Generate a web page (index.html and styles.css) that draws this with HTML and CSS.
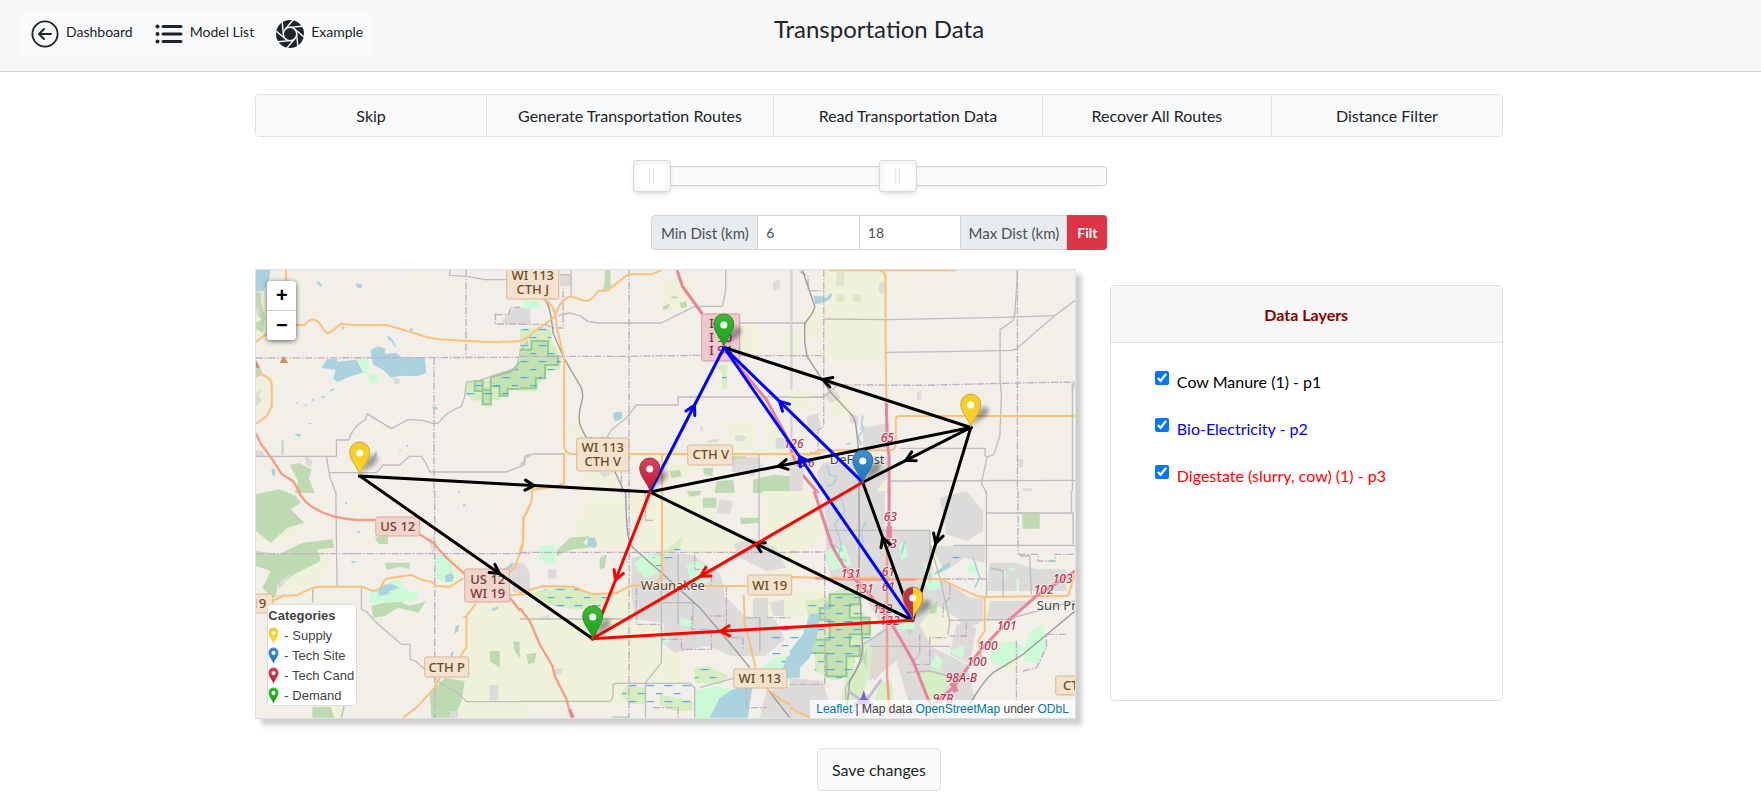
FILE: index.html
```html
<!DOCTYPE html>
<html lang="en">
<head>
<meta charset="utf-8">
<title>Transportation Data</title>
<link rel="stylesheet" href="styles.css">
</head>
<body>
<svg class="defs" width="0" height="0" aria-hidden="true">
  <defs>
    <linearGradient id="gYellow" x2="0" y2="1"><stop offset="0" stop-color="#f5cb2e"/><stop offset="1" stop-color="#ffd326"/></linearGradient>
    <linearGradient id="gBlue" x2="0" y2="1"><stop offset="0" stop-color="#4490cc"/><stop offset="1" stop-color="#1a73bd"/></linearGradient>
    <linearGradient id="gRed" x2="0" y2="1"><stop offset="0" stop-color="#d3485c"/><stop offset="1" stop-color="#c4132f"/></linearGradient>
    <linearGradient id="gGreen" x2="0" y2="1"><stop offset="0" stop-color="#3fb936"/><stop offset="1" stop-color="#17a01a"/></linearGradient>
    <linearGradient id="gSplit"><stop offset=".5" stop-color="#c43045"/><stop offset=".5" stop-color="#ffd326"/></linearGradient>
    <path id="pin" d="M0 0C-1-7-10-14-10-23A10 10 0 0 1 10-23C10-14 1-7 0 0Z"/>
  </defs>
</svg>

<header class="topbar">
  <nav class="topnav">
    <a href="#dashboard" class="navlink">
      <svg viewBox="0 0 28 28"><circle cx="14" cy="14" r="12.6" fill="none" stroke="#212529" stroke-width="1.8"/><path d="M20 14H8.5M13 9l-5 5 5 5" fill="none" stroke="#212529" stroke-width="2" stroke-linecap="round" stroke-linejoin="round"/></svg>
      Dashboard</a>
    <a href="#models" class="navlink">
      <svg viewBox="0 0 28 28"><g stroke="#212529" stroke-width="3" stroke-linecap="round"><path d="M8 6.500H26M8 14H26M8 21.500H26"/></g><g fill="#212529"><circle cx="2.500" cy="6.500" r="2"/><circle cx="2.500" cy="14" r="2"/><circle cx="2.500" cy="21.500" r="2"/></g></svg>
      Model List</a>
    <a href="#example" class="navlink">
      <svg viewBox="0 0 28 28"><circle cx="14" cy="14" r="14" fill="#212529"/><circle cx="14" cy="14" r="6.700" fill="none" stroke="#f8f9fa" stroke-width="1.400"/>
        <g stroke="#f8f9fa" stroke-width="1.400"><path id="slit" d="M9.300 9.300L17 0"/><use href="#slit" transform="rotate(45 14 14)"/><use href="#slit" transform="rotate(90 14 14)"/><use href="#slit" transform="rotate(135 14 14)"/><use href="#slit" transform="rotate(180 14 14)"/><use href="#slit" transform="rotate(225 14 14)"/><use href="#slit" transform="rotate(270 14 14)"/><use href="#slit" transform="rotate(315 14 14)"/></g></svg>
      Example</a>
  </nav>
  <h1 class="title">Transportation Data</h1>
</header>

<main class="page">
  <div class="actions">
    <button type="button">Skip</button>
    <button type="button">Generate Transportation Routes</button>
    <button type="button">Read Transportation Data</button>
    <button type="button">Recover All Routes</button>
    <button type="button">Distance Filter</button>
  </div>

  <form class="filter">
    <div class="slider">
      <input type="range" min="0" max="100" value="0" aria-label="Minimum distance">
      <input type="range" min="0" max="100" value="54" aria-label="Maximum distance">
    </div>
    <div class="group">
      <label class="addon" for="min">Min Dist (km)</label>
      <input id="min" type="text" value="6">
      <input id="max" type="text" value="18">
      <label class="addon" for="max">Max Dist (km)</label>
      <button type="button" class="filt">Filt</button>
    </div>
  </form>

  <div class="columns">
    <section class="map" aria-label="Map">
      <svg class="canvas" viewBox="256 269 819 448" preserveAspectRatio="xMidYMid slice">
        <defs>
          <pattern id="marsh" width="54" height="48" patternUnits="userSpaceOnUse"><path d="M2 8h24M30 32h20" stroke="#3d9be9" stroke-width="3"/></pattern>
          <filter id="soft" x="-50%" y="-50%" width="200%" height="200%"><feGaussianBlur stdDeviation="2"/></filter>
          <marker id="aBlack" markerUnits="userSpaceOnUse" markerWidth="30" markerHeight="30" refX="14" refY="12" orient="auto"><path class="head black" d="M5 7L14 12L5 17"/></marker>
          <marker id="aBlue" markerUnits="userSpaceOnUse" markerWidth="30" markerHeight="30" refX="14" refY="12" orient="auto"><path class="head blue" d="M5 7L14 12L5 17"/></marker>
          <marker id="aRed" markerUnits="userSpaceOnUse" markerWidth="30" markerHeight="30" refX="14" refY="12" orient="auto"><path class="head red" d="M5 7L14 12L5 17"/></marker>
          <path id="shade" d="M0 0L7-6C20-11 20-20 14-20C8-20 5-12 0 0Z" fill="#000" opacity=".35" filter="url(#soft)"/>
        </defs>
        <rect x="200" y="200" width="1000" height="600" fill="#f2efe9"/>

        <!-- north west -->
        <g transform="translate(250 262) scale(.33333)">
          <path class="farm" d="M18 100L50 110V215L18 230ZM18 340L50 350L60 430L18 470ZM400 488l25-2 2 26-25 2zM485 20h18v25h-18z"/>
          <path class="wood" d="M18 85l18 5-3 20 12 50-5 50-22-12v-18l16-10-16-20zM120 605l30-5 35 20-8 25 18 45h-60l10-35zM95 530h7v45h-7zM18 310l15 5 5 20-20 10z"/>
          <path class="town" d="M18 560l20 5 10 15H18zM165 575l25 20-10 20-10-10zM430 345h15l8 10-5 8h-15zM760 170l30-35h50v48h-80zM18 390l20-10-12 20 12 10-20 20zM18 140l10-10v20l-10 5z"/>
          <path class="mint" d="M315 290l38-5 6 50-22-5zM357 335l26-4v30h-26zM820 112h20v25h-20z"/>
          <path class="water" d="M18 20H62L58 50L40 85L18 85ZM215 315l17-27 30-1v9l58-6 20 38-50 17-28 12-12-12 8-25zM362 262l23-12 23 8-3 14 35-2 15 13 70-1 5 48-30 10-50-2-25 7-25-25-30-15zM415 217l15 15 11 24-8-6-6-12-14-12zM200 54l10 4 8 10-4 3-12-9zM318 64q10-6 20 2l-2 8q-8 4-14-2zM275 190h8l2 7-8 4zM480 198l8-2 2 6-8 4zM545 430l16 2 4 8-12-2zM135 513l20-1-5 10-12-4zM165 424h6v6h-6zM215 400h10v5h-10zM240 380l14-4v5l-12 5zM175 480h10v4h-10zM65 615l12 4-2 22-8-4zM375 568l8-4-2 14-8 6zM470 545h6v6h-6zM625 683h6v6h-6zM448 560h6v4h-6zM138 418h6v4h-6zM185 408h8v5h-8z"/>
          <path class="marsh" d="M650 362l25-12 25 8 40-20 60-20 22-40 8-43h12v145h-66v23h-24v9l-25-2v20h-30v-15l-24-3-23-17z"/>
          <path class="marshline" d="M675 354h24v26h24v-38l60-16 40-40h17v92h-67v20h-24v-28h-26v54h-24v-40h-24z"/>
          <path d="M650 362l25-12 25 8 40-20 60-20 22-40 8-43h12v145h-66v23h-24v9l-25-2v20h-30v-15l-24-3-23-17z" fill="url(#marsh)"/>
          <path class="bound" d="M18 285L840 283M649 20V285M553 285V690M737 150v33h95M737 155h40l5-22h30"/>
          <path class="minor" d="M18 580H260V531H297Q303 510 320 490L348 468L352 452L425 497L475 470L520 472L548 481H565C580 465 585 450 635 430L645 400L650 357L690 352L740 335L800 315L812 262L830 235M230 580L240 640L258 690M240 629H380L400 606H450L480 580H515L528 600L540 627H770L825 605V580L840 573M600 20V37L650 40L705 50H775"/>
          <path class="orange" d="M109 20V60M18 237L70 200M130 186H165C180 165 195 165 210 182C225 205 230 218 245 205L275 182L310 186H410L470 203L540 225L570 229L650 234L740 238L825 233L845 205M18 325L50 342Q66 350 66 365V430L50 460L18 483"/>
          <path class="trunk" d="M18 510L35 545L65 585L95 632L130 655L152 690"/>
          <path d="M102 279l13 21H89zM18 290l13 24H18z" fill="#d08f55"/>
        </g>

        <!-- north centre -->
        <g transform="translate(520 262) scale(.33333)">
          <path class="farm" d="M425 45l95 5-4 80-90 5zM655 183h60v110h-60zM790 205h50v75h-50zM140 470l40 10 20 45h-60zM620 475h80v95h-80zM190 600h110l-10 90h-90zM435 600h100l-20 40-80 15zM735 480l70 10v80h-70z"/>
          <path class="wood" d="M255 22h18l-2 35 5 15-25 10 3-25zM430 130l20-8-5 15-15 3zM480 120l20-5 2 18-18 2zM455 100h20v6h-20zM450 625l30-5 5 20-30 5zM550 615l30 0-2 25-25-4zM620 580h60v20h-60zM590 655l50-5 5 40h-60zM700 650l60-15 60 5 5 45-125 5z"/>
          <path class="town" d="M0 140l30 5 5 35-35 5zM120 35h35v35h-35zM760 55l20-5v25l-20 10zM640 590l70-10 20 30-30 30-65-15zM768 525h40v32h-40zM565 530l30-2v8l-30 4zM645 515l35 5-8 15-25-2zM541 490h8v15h-8zM235 625l40 5-20 15z"/>
          <path class="mint" d="M10 115l50-2v22H10z"/>
          <path class="marsh" d="M0 200l60-10 35 10v30l30 60-5 30-45 5-25 60H0zM605 305h17v72h-15v-50l-20-15z"/>
          <path class="marshline" d="M0 260h35v-26h50v46h30v26H76v40H48v30H0"/>
          <path d="M0 200l60-10 35 10v30l30 60-5 30-45 5-25 60H0zM605 305h17v72h-15v-50l-20-15z" fill="url(#marsh)"/>
          <path class="water" d="M281 450q12-6 27-2l-2 18q-8 10-20 8-8-8-5-24z"/>
          <path class="bound" d="M328 20V690M0 184H75L100 195H130V75M0 280H328L600 276M660 278H890M200 524h75M305 600v90"/>
          <path class="minor" d="M618 20V80L608 130H525L425 180H235L205 175L180 158L150 150L115 157M658 180H890M262 522L275 500L320 465L350 426H475V402H910M0 605Q15 600 15 585L40 573H133M154 22V95M120 35h34M718 575V690M0 265l25-30"/>
          <path class="rural" d="M815 20V690"/>
          <path class="rail" d="M75 108C90 130 95 160 100 210L135 290L185 375C192 400 188 410 180 440C175 480 180 490 200 524M285 625L315 690"/>
          <path class="orange" d="M424 22L395 34H325L265 82L235 85C215 110 205 118 190 112L155 100C130 105 115 130 105 160L70 188L40 208C20 230 10 233 0 233M70 108C100 120 110 150 110 190L133 285V550Q135 572 160 573H900M133 570V660L110 672L35 680V690M427 573V690"/>
          <path class="motor" d="M472 22L488 70L548 153M640 290L740 410L800 520L835 620L895 690"/>
        </g>

        <!-- north east -->
        <g transform="translate(790 262) scale(.33333)">
          <path class="farm" d="M105 22H288V290H60L50 250L105 265ZM50 130l50 20v60l-50 20zM120 390l70 20-5 60-60-20zM0 380h60v60H0zM220 590h70v100h-70z"/>
          <path class="wood" d="M140 27h24v42h-24zM140 94h24v22h-24zM190 94h23v24h-23z" opacity=".4"/>
          <path class="town" d="M220 495l80-15v75l-80 5zM100 600l120-20 75 0v60l-40 50H100l-20-60zM268 60l15-5v35h-15zM380 390l15-8v25l-12 5zM685 588h15v25h-15zM700 676h25v14h-25zM103 400l30-25 20 30-30 15zM50 460l35-10 10 50-40 10zM0 600h40v90H0zM845 360h10v20h-10zM180 450l25 10v25l-25-5z"/>
          <path class="water" d="M72 98l18 0 20 6 10-12 8 0-4 14-24 14-24 4z"/>
          <path class="creek" d="M220 457l-5 25 5 20-15 20 10 25M110 605l10 30 20 5-10 25-20 5M170 545l15-5M225 490l-15 10"/>
          <path class="bound" d="M102 20V490L85 500V560M683 20V690M0 278H102M118 365L400 367L640 361L856 357M62 83H102M30 25l25 15v45M60 570h40"/>
          <path class="minor" d="M103 168L300 170L640 163L795 158L856 112M795 158L740 205L680 258L665 262L470 266L290 268M683 22C678 100 678 170 668 174L631 200V350L635 400L630 520L612 575L592 582L575 660L590 690M330 556H586V578L596 583M298 654L856 652M848 690V370L856 358M0 403H100L140 370"/>
          <path class="rail" d="M38 22L75 130Q72 150 45 180V240L52 280L120 385L190 460Q200 480 200 500L205 545L208 690"/>
          <path class="orange" d="M118 22H500M268 22Q287 24 287 45V200L290 420M318 540V472Q318 459 330 459H856M0 573L60 575L90 562H300Q318 560 318 545"/>
          <path class="motor" d="M290 420L292 540L298 580V690"/>
        </g>

        <!-- south west -->
        <g transform="translate(250 490) scale(.33333)">
          <path class="farm" d="M18 20l60-20 60 10-20 60 40 30-40 50H18zM120 180l80-30 50 10-30 100-60 40-90-10zM560 200l60-10 40 60-60 40-40-30zM640 340h200v380H640l-60-60 60-80zM690 330l110 80-50 80-80-20zM200 640h80v40h-80zM370 100h90v40h-90zM300 30l40 10-10 20-30-10z"/>
          <path class="wood" d="M18 10l70-15 50 20 15 20-30 20 40 40-50 15-50 45-45-35zM18 180l70 10 70-35 90-10 5 25-50 5 10 35-80 40-50 40-5 25 50-10-60 15-30-30 25-50-45-15zM405 215h75v20l-30-8-40 10zM375 140l40-5v25l-30-2zM365 345l70-20 45 20 50-15-25 35-60-15-40 25-35 5zM540 610l45-50 60 10-10 60-20 50H545zM188 648h55l10 32h-65zM720 480h30v50l-30-20zM790 450l50 10v60l-25-10-20-30z"/>
          <path class="town" d="M720 582h26v46h-26zM780 215l40 0 20 30v60h-50zM810 455l30-10v30zM538 150l15-20 10 40-15 15zM600 660h25v20h-25zM75 290l40-40 8 5-30 35z"/>
          <path class="mint" d="M360 305l30-20 65-25 5 30 45 20v20l-145 8zM556 190l50 5 5 55-30 25-25-20z"/>
          <path class="water" d="M385 300l20-20 25 0 20 10-30 10-10 12-20 2zM585 255l18-10 10 10-5 18-20 0zM760 235l30-20-2 15-18 8zM725 355l20-10v8l-15 8zM617 405l12-4-4 20-10 8zM602 485l10-5-2 14-8 4zM305 210h12v6h-12zM300 185h12v6h-12zM322 120h8v6h-8zM286 33h6v6h-6zM640 40h8v6h-8zM640 375h12v4h-12z"/>
          <path class="bound" d="M18 188H840M555 0V690"/>
          <path class="minor" d="M258 0L262 285M189 335V290M335 290V355L350 362L380 395L455 460H480L482 505L500 512L570 575L630 610L650 632H840M275 680l8-35"/>
          <path class="orange" d="M68 330L100 315L140 313L190 290L210 287H335L370 300Q395 298 400 275Q405 262 420 262L460 255L485 252L520 268L545 272L560 285L600 288L640 262M780 243L795 230L820 160L822 80L840 40M780 313L840 308M680 336L650 375V470L630 498M570 560L555 590L500 650L460 680"/>
          <path class="trunk" d="M145 0C160 30 180 45 200 55C240 80 290 85 320 87H378M510 130L550 155L590 200L646 250M780 320L820 370L840 400"/>
        </g>

        <!-- south centre -->
        <g transform="translate(520 490) scale(.33333)">
          <path class="farm" d="M210 20h110v150H180l-20-60zM330 0h95v180h-60zM430 20h120l60 90 110 40v40H430zM0 320l100 60h90v-10l80-60 80-20v290l-20 60H0zM330 400h95v180h-95zM430 480l60 0 0 100h-60zM730 0h110v250h-110zM680 320h140v60H700zM20 390l80 30 20 80-80-30z"/>
          <path class="town" d="M335 200l80-15 10-10 100 20 80 60 10 60 60 60 90 10 30 60-60 50h-100l-70-30-100 20-40-30 10-60-90-10-10-80zM85 235h25v30H85zM640 160l60-20 70 30 30 60-60 10-80-40zM700 320h45v60h-45zM748 335l45-10v50h-30zM600 25l40 5-10 40-40-5zM105 535l25-5-5 20-20 3zM740 600l100-20v100H720zM60 380l30-10v15z"/>
          <path class="wood" d="M110 180l40-40 60-5-20 20 20 15-50 5-50 20zM500 0h45l-5 12-30 5zM240 200l20-10-5 40-15 5zM20 490l30-5-5 30-20 5zM550 20h40v30h-40zM660 80l60 0-5 15-50 5zM278 676h50v8h-50zM820 480l20-20v60z"/>
          <path class="mint" d="M60 165l45-5v60l-30-5-18-10zM370 190l50 5 5 50-50 15-30-40zM500 220l45-10 30 60-60 10zM525 600l60-15 60 10-10 40-50 46h-60zM700 550l60-50 80-10v60l-60 40zM430 440l20 0-2 15h-18zM480 380l40 10-5 20-30-5z"/>
          <path class="marsh" d="M20 310l60-15 80-10 50 25 60 5-20 45-80-5-70-10zM525 530l40-5 60 30-20 25-80-5zM320 585l60 5v50l-50 0-30-30zM420 610l98 20v30h-60l-40-20zM430 185l60-50-10 35-40 30z"/>
          <path d="M20 310l60-15 80-10 50 25 60 5-20 45-80-5-70-10zM525 530l40-5 60 30-20 25-80-5zM300 580h215v70H320zM400 200l90-60-10 60-60 60zM750 400h90v180h-80z" fill="url(#marsh)"/>
          <path class="water" d="M205 140l20 0 8 20-8 12-24-8zM570 680L600 620L640 595L700 580L690 640L685 680zM780 560L800 500L840 470V560z"/>
          <path class="bound" d="M0 184H840M328 0V680M350 290V400h75v45h60v30h90v-60h-60v-40M525 190v45h50v50h45v90h-50M620 380v60h50v35M740 380h100M720 380v100M680 590v60h60M400 650h75v30"/>
          <path class="minor" d="M0 384H340M0 631H265Q280 630 280 610V580Q282 577 300 577H510L525 590V680M540 590L640 562M425 180V515L377 575V680M400 88H377V0M718 0V160M475 190V400M430 335h90M670 380H720V480M520 330V400"/>
          <path class="rail" d="M318 0Q318 50 322 110Q325 160 345 175L430 250L540 350L625 450L690 530M740 590L810 680"/>
          <path class="orange" d="M37 0Q40 40 10 80V150L0 180M0 306L70 285L160 287L200 303L220 310L290 306L330 285L365 283L500 285H680M427 0V250L410 283M672 312L675 400Q695 470 708 533M740 592L780 625L840 652M817 258H840"/>
          <path class="trunk" d="M0 352L30 390L60 460L98 525L105 555L140 625L155 680"/>
          <path class="motor" d="M150 655L160 680"/>
        </g>

        <!-- south east -->
        <g transform="translate(790 490) scale(.33333)">
          <path class="farm" d="M300 120h120v140H300zM0 0h80l30 120-50 60H0zM330 290h140l10 150-100 60-60-100zM0 290l110 0-30 80-80 20zM420 160l60 50-40 50zM620 520l60-20 30 30-60 20z"/>
          <path class="town" d="M105 0h180v120l40 0 95 0 10 140 50 20 60 40v70l-40-10-60-40-50 60 40 80 30 10-10 140 50 80H380l-60-200-80 60-20-100 60-60-60-100-90-30-20-80zM450 20l80-20 50 60 0 60-50 30-60-20zM425 165l160 0 0 50-60-15-60 40zM480 320l100 0v70l-60 30zM600 215l80 0 60 20 90 0v65H590zM600 330l120 0-50 60-80 0zM0 560l100 10 30 110H0zM410 460l120 60 40 160H430zM500 400l60 10-20 110-60-30z"/>
          <path class="white" d="M590 0h260v160H590z"/>
          <path d="M245 470l45 0v60l-35 40-15-30z" fill="#e0d6d2"/>
          <path class="mint" d="M325 165l20-15 10 50-20 5zM400 210l40 40-30 5zM530 225l30-10 5 30-25 5zM310 390h65v25h-50zM720 420l40-20 10 70-30 50-40-10zM630 410l30-10-10 30zM475 480l50-15-5 40zM610 460l60-10 40 20-60 60-50-20zM440 490l20 20-10 25-30-10zM105 180l60-20 20 60-60 20zM640 240h10v20h-10zM680 260h8v40h-8zM660 230h15v10h-15zM770 210l30-10v20zM390 260l60 10 10 20-40 10z"/>
          <path class="greenish" d="M200 420l50 50-10 80-40 110-50-10 20-100 40-40zM270 570l40 10-5 80-60 10zM380 550l70-20 30 50-60 70z"/>
          <path class="wood" d="M698 68h52v45h-52zM420 345l25-15-5 35-20 5zM350 415l20 0-10 20zM220 510l10-40v60z"/>
          <path class="marsh" d="M105 320l60-40 60 20-10 60 30 30v50l-40 30-20 80-50 20-60-30 0-80-40-20 20-60-10-50z"/>
          <path class="marshline" d="M120 310h90v30h-30v40h60v50h-60v36h30v30h-40v60h-60v-70H60v-40h60v-60H90v-35h30z"/>
          <path d="M105 320l60-40 60 20-10 60 30 30v50l-40 30-20 80-50 20-60-30 0-80-40-20 20-60-10-50zM430 240l70-50 20 0-60 50z" fill="url(#marsh)"/>
          <path class="water" d="M0 480L40 430L60 370L90 365L85 420L60 500L30 530L0 530ZM100 350l10-20 8 5-8 25zM430 250l50-40 0 20-40 20z"/>
          <path class="creek" d="M150 0l15 60-30 40 20 60-10 40 25 10M130 160l30 20M230 90l-15 30 5 50M345 150l-10 40M550 200l20 60-15 30"/>
          <path class="bound" d="M0 183H105V580H0M460 264H595M685 0V190M685 190h60v20h50v-20h60M480 280v40l-20 20v40M390 430v60l-30 30h60v-80h50M530 395v40h-50M770 430h60M680 450v230M700 540l40-10 30-60v-40"/>
          <path class="minor" d="M105 118H420M420 118V270M490 163H856M590 66H850V160M590 0V318M420 155L450 260L480 390L475 430M475 388L650 385L856 330M240 466H480M640 318V240L600 230M725 310L720 195H690M350 545L420 540L475 555M168 680V590L220 500V460L290 415M380 680L360 620M845 0V66"/>
          <path class="rail" d="M208 0V240L218 470Q215 520 180 570L168 680M856 360L700 490L610 545Q580 570 540 640"/>
          <path class="orange" d="M0 258L75 260H300M300 264H455Q480 280 565 316L585 318L835 314L855 250M585 318V420L565 450L575 500M0 650L60 680"/>
          <path class="trunk" d="M75 262L190 266H380M292 180V550L300 680"/>
          <path class="motor" d="M73 0L125 160Q160 230 190 260L240 310L300 390L330 440L370 510L425 650L440 680M856 240L740 315L660 385L570 480L490 590L410 660M298 0V170"/>
          <path class="motor wide" d="M298 105V140M487 575l12 28"/>
          <path d="M175 600l55 40M275 565l-50 70" stroke="#c4bdd6" stroke-width="9" fill="none"/>
          <path d="M222 598l8 24 22 16v8l-22-6-2 16 10 8h-32l10-8-2-16-22 6v-8l22-16z" fill="#7d5fd0"/>
        </g>

        <g class="shield">
          <rect x="507" y="266" width="52" height="32" rx="2"/><rect x="577" y="437" width="52" height="33" rx="2"/><rect x="688" y="444" width="45" height="20" rx="2"/>
          <rect x="240" y="593" width="33" height="19" rx="2"/><rect x="425" y="656" width="44" height="20" rx="2"/><rect x="748" y="574" width="44" height="20" rx="2"/>
          <rect x="734" y="668" width="53" height="19" rx="2"/><rect x="1056" y="675" width="53" height="19" rx="2"/>
          <g class="us"><rect x="376" y="516" width="44" height="19" rx="2"/><rect x="465" y="568" width="45" height="33" rx="2"/></g>
          <rect class="interstate" x="702" y="313" width="38" height="47" rx="2"/>
        </g>
        <g class="road">
          <text x="533" y="279">WI 113</text><text x="533" y="293">CTH J</text>
          <text x="603" y="451">WI 113</text><text x="603" y="465">CTH V</text>
          <text x="711" y="458">CTH V</text><text x="259" y="607">19</text>
          <text x="447" y="671">CTH P</text><text x="770" y="589">WI 19</text><text x="760" y="682">WI 113</text><text x="1071" y="689">CT</text>
          <g class="ustext"><text x="398" y="530">US 12</text><text x="488" y="583">US 12</text><text x="488" y="597">WI 19</text></g>
          <g class="itext"><text x="721" y="327">I 39</text><text x="721" y="341">I 90</text><text x="721" y="354">I 94</text></g>
        </g>
        <g class="exit">
          <text x="784" y="447">126</text><text x="795" y="466">126</text><text x="881" y="441">65</text><text x="884" y="520">63</text><text x="884" y="547">63</text>
          <text x="882" y="575">61</text><text x="882" y="590">61</text><text x="841" y="577">131</text><text x="854" y="592">131</text><text x="873" y="612">132</text><text x="880" y="624">132</text>
          <text x="1053" y="582">103</text><text x="1034" y="593">102</text><text x="997" y="629">101</text><text x="978" y="649">100</text><text x="967" y="665">100</text><text x="946" y="681">98A-B</text><text x="933" y="702">97B</text>
        </g>
        <g class="place"><text x="830" y="463">DeForest</text><text x="641" y="589">Waunakee</text><text x="1037" y="609">Sun Pr</text><text x="834" y="716" class="county">Dane County</text></g>

        <g class="black">
          <polyline points="360,475 534.4,484.6 650.3,491"/><polyline points="360,475 499.6,572.6 592.7,637.7"/>
          <polyline points="971,426.500 823,378.500 724.3,346.500"/><polyline points="971,426.500 778.6,465.200 650.3,491"/>
          <polyline points="971,426.500 906.2,459.400 863,481.300"/><polyline points="971,426.500 936,542.200 912.7,619.300"/>
          <polyline points="912.7,619.300 882.9,536.500 863,481.300"/><polyline points="912.7,619.300 755.3,542.300 650.3,491"/>
        </g>
        <g class="blue">
          <polyline points="650.3,491 694.7,404.300 724.3,346.500"/><polyline points="863,481.300 779.8,400.400 724.3,346.500"/><polyline points="912.7,619.300 799.7,455.600 724.3,346.500"/>
        </g>
        <g class="red">
          <polyline points="650.3,491 615.7,579 592.7,637.700"/><polyline points="863,481.300 700.8,575.100 592.7,637.700"/><polyline points="912.7,619.300 720.7,630.300 592.7,637.700"/>
        </g>
        <g class="pins">
          <g transform="translate(724 346)"><use href="#shade"/><use href="#pin" fill="url(#gGreen)" stroke="#2a8f26"/><circle cy="-22" r="3.5"/></g>
          <g transform="translate(971 426)"><use href="#shade"/><use href="#pin" fill="url(#gYellow)" stroke="#cfa92c"/><circle cy="-22" r="3.5"/></g>
          <g transform="translate(360 474)"><use href="#shade"/><use href="#pin" fill="url(#gYellow)" stroke="#cfa92c"/><circle cy="-22" r="3.5"/></g>
          <g transform="translate(863 482)"><use href="#shade"/><use href="#pin" fill="url(#gBlue)" stroke="#2c72a8"/><circle cy="-22" r="3.5"/></g>
          <g transform="translate(650 490)"><use href="#shade"/><use href="#pin" fill="url(#gRed)" stroke="#a8293d"/><circle cy="-22" r="3.5"/></g>
          <g transform="translate(913 619)"><use href="#shade"/><use href="#pin" fill="url(#gSplit)" stroke="#b58a3a"/><circle cy="-22" r="3.5"/></g>
          <g transform="translate(593 638)"><use href="#shade"/><use href="#pin" fill="url(#gGreen)" stroke="#2a8f26"/><circle cy="-22" r="3.5"/></g>
        </g>
      </svg>

      <div class="zoom"><button type="button" aria-label="Zoom in">+</button><button type="button" aria-label="Zoom out">−</button></div>
      <div class="legend">
        <strong>Categories</strong>
        <span><svg viewBox="-11 -34 22 34"><use href="#pin" fill="url(#gYellow)"/><circle cy="-22" r="4" fill="#fff"/></svg>- Supply</span>
        <span><svg viewBox="-11 -34 22 34"><use href="#pin" fill="url(#gBlue)"/><circle cy="-22" r="4" fill="#fff"/></svg>- Tech Site</span>
        <span><svg viewBox="-11 -34 22 34"><use href="#pin" fill="url(#gRed)"/><circle cy="-22" r="4" fill="#fff"/></svg>- Tech Cand</span>
        <span><svg viewBox="-11 -34 22 34"><use href="#pin" fill="url(#gGreen)"/><circle cy="-22" r="4" fill="#fff"/></svg>- Demand</span>
      </div>
      <div class="credit"><a href="#leaflet">Leaflet</a> | Map data <a href="#osm">OpenStreetMap</a> under <a href="#odbl">ODbL</a></div>
    </section>

    <section class="card">
      <h2>Data Layers</h2>
      <div class="layers">
        <label><input type="checkbox" checked><span>Cow Manure (1) - p1</span></label>
        <label class="p2"><input type="checkbox" checked><span>Bio-Electricity - p2</span></label>
        <label class="p3"><input type="checkbox" checked><span>Digestate (slurry, cow) (1) - p3</span></label>
      </div>
    </section>
  </div>

  <button type="button" class="save">Save changes</button>
</main>
</body>
</html>
```
FILE: styles.css
```css
* { box-sizing: border-box; }
body { margin: 0; background: #fff; color: #212529; font: 16px/24px Lato, sans-serif; }
button, input { font: inherit; color: inherit; }
.defs { position: absolute; }

.topbar { display: grid; grid-template-columns: 1fr auto 1fr; align-items: start; height: 72px; padding: 12px 22px 0 19px; background: #f7f7f7; border-bottom: 1px solid #d5d5d5; }
.topnav { justify-self: start; display: flex; gap: 22px; height: 45px; padding: 8px 9px 8px 12px; border-radius: 4px; background: #f8f9fa; }
.navlink { display: flex; gap: 7px; font-size: 14px; line-height: 24px; color: #212529; text-decoration: none; height: 28px; white-space: nowrap; }
.navlink svg { width: 28px; height: 28px; }
.title { margin: 0; font-size: 24px; line-height: 34px; font-weight: 400; }

.page { display: flex; flex-direction: column; width: 71%; margin: 0 auto; padding: 22px 3px 17px 0; }
.actions { display: grid; grid-template-columns: 230fr 288fr 269fr 230fr 231fr; border: 1px solid #dee2e6; border-radius: 4px; overflow: hidden; }
.actions button { height: 41px; padding: 0 8px; border: 0; background: #f8f9fa; }
.actions button + button { border-left: 1px solid #dee2e6; }

.filter { width: 456px; margin: 29px 0 0 396px; }
.slider { position: relative; height: 20px; border: 1px solid #d3d3d3; border-radius: 4px; background: #fafafa; box-shadow: inset 0 1px 1px #f0f0f0, 0 3px 6px -5px #bbb; }
.slider input { position: absolute; left: -19px; top: -7px; width: calc(100% + 38px); height: 32px; margin: 0; appearance: none; background: none; pointer-events: none; }
.slider input::-webkit-slider-thumb { appearance: none; pointer-events: auto; width: 38px; height: 32px; border: 1px solid #d9d9d9; border-radius: 3px; background: linear-gradient(#e8e7e6, #e8e7e6) 15px 7px / 1px 16px no-repeat, linear-gradient(#e8e7e6, #e8e7e6) 19px 7px / 1px 16px no-repeat, #fff; box-shadow: inset 0 0 1px #fff, inset 0 1px 7px #ebebeb, 0 3px 6px -3px #bbb; }
.group { display: flex; height: 35px; margin-top: 29px; font-size: 14px; line-height: 34px; }
.group .addon { flex: 0 0 107px; text-align: center; border: 1px solid #ced4da; background: #e9ecef; color: #495057; white-space: nowrap; font-size: 15px; }
.group .addon:first-child { border-radius: 4px 0 0 4px; }
.group input { flex: 1; min-width: 0; margin-left: -1px; padding: 0 8px; border: 1px solid #ced4da; color: #495057; background: #fff; }
.group input + .addon { margin-left: -1px; }
.filt { flex: 0 0 40px; padding: 0; border: 0; border-radius: 0 4px 4px 0; background: #dc3545; color: #fff; font-weight: 700; }

.columns { display: grid; grid-template-columns: 821fr 393fr; gap: 34px; align-items: start; margin-top: 19px; }
.map { position: relative; height: 450px; border: 1px solid #dee2e6; box-shadow: 6px 6px 5px rgba(0, 0, 0, .2); font-family: "Liberation Sans", sans-serif; color: #444; }
.canvas { display: block; width: 100%; height: 100%; }

.farm { fill: #f0f1da; } .wood { fill: #bddab1; } .town { fill: #dcdbda; } .mint { fill: #cdfad6; } .greenish { fill: #d5eec4; }
.water { fill: #aad3df; } .white { fill: #f2efe9; } .marsh { fill: #d6edc0; }
.marshline { fill: #c3e2b0; stroke: #94ca91; stroke-width: 6; }
.creek, .bound, .minor, .rural, .rail, .orange, .trunk, .motor { fill: none; stroke-linejoin: round; }
.creek { stroke: #aad3df; stroke-width: 5; }
.bound { stroke: #c3adc5; stroke-width: 4; stroke-dasharray: 22 5 5 5; }
.minor { stroke: #bdbdbd; stroke-width: 4; } .rural { stroke: #d4d4d4; stroke-width: 7; }
.rail { stroke: #9a9a98; stroke-width: 4; } .orange { stroke: #fbc07a; stroke-width: 6; }
.trunk { stroke: #f79c84; stroke-width: 7; } .motor { stroke: #e9829a; stroke-width: 9; } .wide { stroke-width: 16; }

.shield rect { fill: #f4e2cf; stroke: #d6b790; stroke-width: 1; }
.shield .us rect { fill: #f0d5cd; stroke: #dba79b; }
.shield .interstate { fill: #edc9d0; stroke: #d993a5; }
.road { font: 500 13px "Noto Sans", sans-serif; fill: #6a4c22; text-anchor: middle; }
.ustext { fill: #7a3b32; } .itext { fill: #8a2846; }
.exit { font: italic 500 12px "Noto Sans", sans-serif; fill: #b8354e; stroke: #fff; stroke-opacity: .5; stroke-width: 2; paint-order: stroke; }
.place { font: 13px "Noto Sans", sans-serif; fill: #444; stroke: #fff; stroke-opacity: .5; stroke-width: 2; paint-order: stroke; }
.place .county { fill: #9a86d6; }

.black, .blue, .red { fill: none; stroke-width: 3; stroke-linecap: square; }
.black { stroke: #000; } .blue { stroke: #00f; } .red { stroke: #f00; }
.black polyline { marker-mid: url(#aBlack); } .blue polyline { marker-mid: url(#aBlue); } .red polyline { marker-mid: url(#aRed); }
.head { stroke-width: 3; stroke-linecap: round; }
.pins circle { fill: #fff; }

.zoom { position: absolute; left: 11px; top: 11px; width: 29px; border-radius: 4px; overflow: hidden; background: #fff; box-shadow: 0 1px 5px rgba(0, 0, 0, .65); }
.zoom button { display: block; width: 100%; height: 29px; padding: 0; border: 0; background: #fff; color: #000; font: bold 20px/29px "Liberation Sans", sans-serif; }
.zoom button + button { height: 30px; border-top: 1px solid #ccc; }
.legend { position: absolute; left: 11px; bottom: 12px; display: grid; grid-auto-rows: 20px; width: 90px; border: 1px solid #ddd; border-radius: 4px; background: #fff; font-size: 13px; line-height: 21px; white-space: nowrap; }
.legend span { display: flex; align-items: center; gap: 5px; }
.legend svg { width: 11px; height: 17px; }
.credit { position: absolute; right: 0; bottom: 0; padding: 0 6px; background: rgba(255, 255, 255, .75); font-size: 12px; line-height: 18px; white-space: nowrap; }
.credit a { color: #0078a8; text-decoration: none; }

.card { height: 416px; margin-top: 16px; border: 1px solid #dfdfdf; border-radius: 4px; }
.card h2 { margin: 0; height: 57px; border-bottom: 1px solid #dfdfdf; background: #f7f7f7; color: #8b0000; font-size: 16px; line-height: 58px; font-weight: 700; text-align: center; }
.layers { display: grid; grid-auto-rows: 47px; padding: 28px 16px 0 44px; }
.layers label { display: flex; align-items: flex-start; gap: 8px; color: #000; line-height: 22px; }
.layers input { width: 14px; height: 14px; margin: 0; accent-color: #0075ff; }
.layers .p2 { color: #00f; } .layers .p3 { color: #f00; }
.save { align-self: center; height: 43px; margin-top: 29px; padding: 0 14px; border: 1px solid #dee2e6; border-radius: 4px; background: #f8f9fa; }
```
